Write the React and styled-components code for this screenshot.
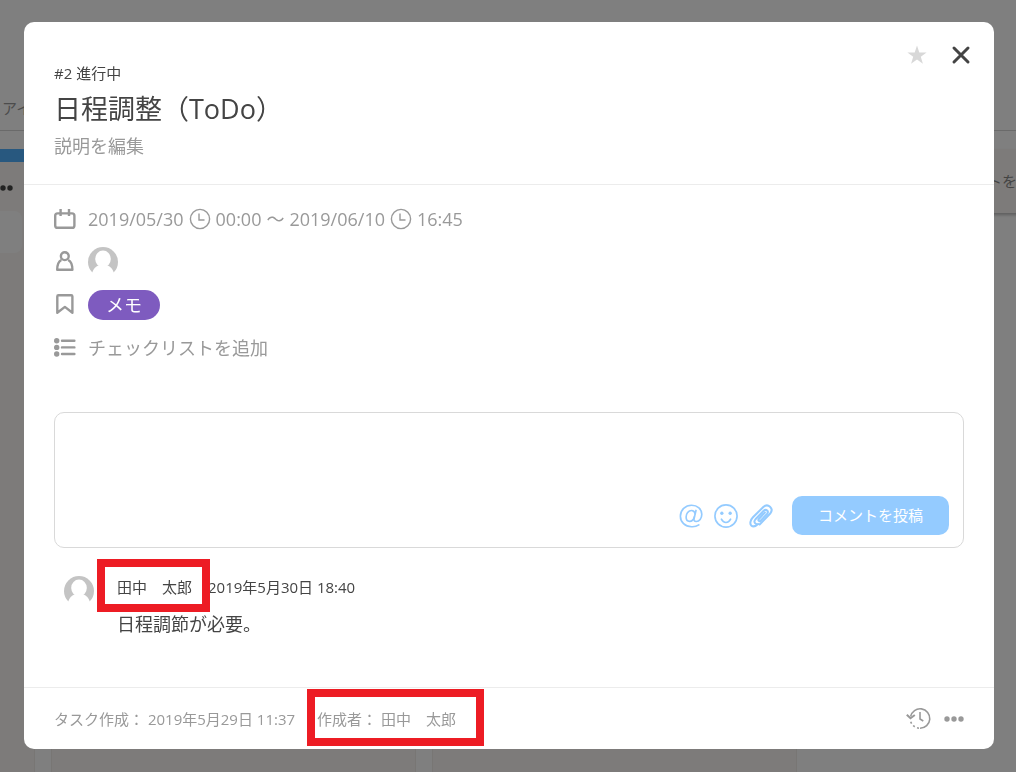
import { useState } from "react";
import styled, { createGlobalStyle } from "styled-components";

const assignee = "田中　太郎";

export default function TaskPage() {
  return (
    <>
      <GlobalStyle />
      <Page>
        <Nav>アイ</Nav>
        <Board>
          <Column>
            <ColumnBar />
            <ColumnMenu type="button" aria-label="リストメニュー">
              <Dots />
            </ColumnMenu>
            <Card />
          </Column>
          <Column />
          <Column />
          <AddList type="button">リストを追加</AddList>
        </Board>
      </Page>
      <Overlay>
        <TaskDialog />
      </Overlay>
    </>
  );
}

function TaskDialog() {
  const [comment, setComment] = useState("");

  return (
    <Dialog role="dialog" aria-labelledby="task-title">
      <Header>
        <Heading>
          <Status>#2 進行中</Status>
          <Title id="task-title">日程調整（ToDo）</Title>
          <TextButton type="button">説明を編集</TextButton>
        </Heading>
        <HeaderActions>
          <IconButton type="button" aria-label="お気に入り">
            <StarIcon />
          </IconButton>
          <IconButton type="button" aria-label="閉じる">
            <CloseIcon />
          </IconButton>
        </HeaderActions>
      </Header>

      <Details>
        <DetailRow>
          <CalendarIcon />
          <Schedule>
            <span>2019/05/30</span>
            <ClockIcon />
            <span>00:00</span>
            <span>～</span>
            <span>2019/06/10</span>
            <ClockIcon />
            <span>16:45</span>
          </Schedule>
        </DetailRow>
        <DetailRow>
          <PersonIcon />
          <Avatar />
        </DetailRow>
        <DetailRow>
          <BookmarkIcon />
          <Tag>メモ</Tag>
        </DetailRow>
        <DetailRow>
          <ListIcon />
          <TextButton type="button">チェックリストを追加</TextButton>
        </DetailRow>
      </Details>

      <CommentForm onSubmit={(event) => event.preventDefault()}>
        <CommentInput
          aria-label="コメント"
          value={comment}
          onChange={(event) => setComment(event.target.value)}
        />
        <CommentTools>
          <IconButton type="button" aria-label="メンション">
            <AtIcon />
          </IconButton>
          <IconButton type="button" aria-label="絵文字">
            <SmileIcon />
          </IconButton>
          <IconButton type="button" aria-label="ファイルを添付">
            <ClipIcon />
          </IconButton>
          <SubmitButton type="submit">コメントを投稿</SubmitButton>
        </CommentTools>
      </CommentForm>

      <Comment>
        <Avatar />
        <div>
          <CommentMeta>
            <NameMark>{assignee}</NameMark>
            <time>2019年5月30日 18:40</time>
          </CommentMeta>
          <CommentBody>日程調節が必要。</CommentBody>
        </div>
      </Comment>

      <Footer>
        <span>タスク作成： 2019年5月29日 11:37</span>
        <CreatorMark>作成者： {assignee}</CreatorMark>
        <FooterActions>
          <IconButton type="button" aria-label="履歴">
            <HistoryIcon />
          </IconButton>
          <IconButton type="button" aria-label="その他">
            <Dots />
          </IconButton>
        </FooterActions>
      </Footer>
    </Dialog>
  );
}

function Dots() {
  return (
    <svg width="20" height="6" viewBox="0 0 20 6" fill="currentColor">
      <circle cx="3" cy="3" r="2.7" />
      <circle cx="10" cy="3" r="2.7" />
      <circle cx="17" cy="3" r="2.7" />
    </svg>
  );
}

function StarIcon() {
  return (
    <svg width="20" height="20" viewBox="0 0 20 20" fill="#d8d8d8">
      <path d="M10 .6 12.3 7.4 19.6 7.5 13.8 11.8 15.9 18.8 10 14.6 4.1 18.8 6.2 11.8.4 7.5 7.7 7.4Z" />
    </svg>
  );
}

function CloseIcon() {
  return (
    <svg width="20" height="20" viewBox="0 0 20 20" stroke="#444" strokeWidth="3" strokeLinecap="round">
      <path d="M3 3 17 17M17 3 3 17" />
    </svg>
  );
}

function CalendarIcon() {
  return (
    <DetailSvg viewBox="0 0 22 22">
      <rect x="1.2" y="5.4" width="19.2" height="14.4" rx="2.4" />
      <path d="M6.6 1V8M15 1V8" />
    </DetailSvg>
  );
}

function PersonIcon() {
  return (
    <DetailSvg viewBox="0 0 22 22">
      <circle cx="10.8" cy="5.2" r="3.9" />
      <path d="M7.400 9C4.600 10.400 3.200 13.800 3.200 18.800H18.400C18.400 13.800 17 10.400 14.200 9" />
    </DetailSvg>
  );
}

function BookmarkIcon() {
  return (
    <DetailSvg viewBox="0 0 22 22">
      <path d="M3.3 2.5Q3.3 1.3 4.5 1.3H17.2Q18.4 1.3 18.4 2.5V18.7L10.9 12.9 3.3 18.7Z" />
    </DetailSvg>
  );
}

function ListIcon() {
  return (
    <DetailSvg viewBox="0 0 22 22">
      <path d="M8 3.8H20.4M8 10.4H20.4M8 17H20.4" strokeLinecap="round" />
      <g fill="#999" stroke="none">
        <circle cx="2.7" cy="3.8" r="2.7" />
        <circle cx="2.7" cy="10.4" r="2.7" />
        <circle cx="2.7" cy="17" r="2.7" />
      </g>
    </DetailSvg>
  );
}

function ClockIcon() {
  return (
    <svg width="22" height="22" viewBox="0 0 22 22" fill="none" stroke="#999" strokeWidth="1.4">
      <circle cx="11" cy="11" r="9.6" />
      <path d="M10 5.5V12H15.5" />
    </svg>
  );
}

function Avatar() {
  return (
    <svg width="30" height="30" viewBox="0 0 30 30" role="img" aria-label={assignee}>
      <circle cx="15" cy="15" r="15" fill="#c4c4c4" />
      <ellipse cx="15" cy="12" rx="7.8" ry="8.4" fill="#fff" />
      <path d="M10.500 18.500C7.500 19.500 5.500 21.500 4.200 25.600L3 31H27L25.800 25.600C24.500 21.500 22.500 19.500 19.500 18.500Z" fill="#fff" />
    </svg>
  );
}

function AtIcon() {
  return (
    <svg width="24" height="24" viewBox="0 0 26 26" fill="none" stroke="#94cbff" strokeWidth="1.8" strokeLinecap="round">
      <path d="M21.5 22.6C19.4 24 16.5 24.8 13.6 24.6 6.600 24.400 1.500 19.600 1.500 13.200 1.500 6.500 6.900 1.400 13.600 1.400 20.100 1.400 24.700 5.600 24.700 11.200 24.700 15.700 22 19 18.700 19 16.700 19 15.900 17.800 16.300 15.700L18.400 7" />
      <path d="M17.4 10.5C17 8.3 15.6 7 13.5 7 10.2 7 7.7 10.4 7.7 14.1 7.7 16.900 9.200 18.800 11.500 18.800 14.100 18.800 15.800 16.800 16.600 14" />
    </svg>
  );
}

function SmileIcon() {
  return (
    <svg width="24" height="24" viewBox="0 0 26 26" fill="none" stroke="#94cbff" strokeWidth="1.8" strokeLinecap="round">
      <circle cx="13" cy="13" r="12" />
      <path d="M8 16.5C9.1 18.8 10.8 20 13 20S16.9 18.8 18 16.5" />
      <g fill="#94cbff" stroke="none">
        <circle cx="8.5" cy="10" r="1.8" />
        <circle cx="17.5" cy="10" r="1.8" />
      </g>
    </svg>
  );
}

function ClipIcon() {
  return (
    <svg width="24" height="24" viewBox="0 0 26 26" fill="none" stroke="#94cbff" strokeWidth="2.2" strokeLinecap="round" strokeLinejoin="round">
      <path d="M17.2 9.3 10.7 16.2C9.3 17.7 11.2 19.5 12.6 18.1L19.5 10.8C22 8 18.6 4.7 15.9 7.4L7 16.6C5.2 18.6 5.600 20.600 7.600 21.600" />
      <path d="M9.800 21.600C7 24.400 4 24.600 2.400 23.200 .800 21.400 1.200 17.600 4.300 14.400L15.500 3.300C20.600-1.400 27.300 4.900 23 10.300L11.500 22.200" />
    </svg>
  );
}

function HistoryIcon() {
  return (
    <svg width="26" height="24" viewBox="0 0 26 24" fill="none" stroke="#999" strokeWidth="1.6">
      <path d="M4.6 9.500A9.700 9.700 0 1 1 14 21.200" />
      <path d="M13 21.200A9.700 9.700 0 0 1 4.300 13" strokeDasharray="2 2.5" />
      <path d="M.8 7.7 4.5 11.3 8.8 8" strokeWidth="2" />
      <path d="M14 5V12L17.300 14" />
    </svg>
  );
}

const GlobalStyle = createGlobalStyle`
  * {
    box-sizing: border-box;
  }

  body {
    margin: 0;
    color: #444;
    background: #fff;
    font-family: "Open Sans", "Noto Sans CJK JP", sans-serif;
    font-size: 15px;
    line-height: 22px;
  }

  button,
  textarea {
    font: inherit;
    color: inherit;
  }

  svg {
    display: block;
    flex: none;
  }
`;

const Page = styled.div`
  height: 100vh;
  overflow: hidden;
  display: flex;
  flex-direction: column;
`;

const Nav = styled.nav`
  padding: 97px 0 11px 2px;
  border-bottom: 1px solid #d4d4d4;
  color: #999;
`;

const Board = styled.main`
  flex: 1;
  display: flex;
  gap: 16px;
  margin: 18px 0 0 -330px;
`;

const Column = styled.section`
  flex: none;
  width: 365px;
  background: #faf7f4;
  border: solid #f0ece8;
  border-width: 0 1px;
`;

const ColumnBar = styled.div`
  height: 13px;
  background: #50b0ff;
`;

const ColumnMenu = styled.button`
  display: flex;
  margin: 23px 21px 20px auto;
  padding: 0;
  border: 0;
  background: none;
`;

const Card = styled.div`
  height: 42px;
  margin: 0 12px;
  border-radius: 8px;
  background: #fff;
`;

const AddList = styled.button`
  flex: none;
  width: 365px;
  height: 64px;
  padding: 0 0 0 144px;
  border: 0;
  background: #faf7f4;
  box-shadow: 0 2px 3px #bbb;
  color: #888;
  text-align: left;
`;

const Overlay = styled.div`
  position: fixed;
  inset: 0;
  padding: 22px 22px 22px 24px;
  overflow: auto;
  background: rgba(0, 0, 0, 0.5);
`;

const Dialog = styled.div`
  border-radius: 10px;
  background: #fff;
`;

const Header = styled.header`
  display: flex;
  justify-content: space-between;
  padding: 22px 23px 26px 30px;
  border-bottom: 1px solid #ececec;
`;

const Heading = styled.div`
  display: flex;
  flex-direction: column;
  align-items: flex-start;
  gap: 4px;
  padding-top: 18px;
`;

const Status = styled.p`
  margin: 0;
`;

const Title = styled.h1`
  margin: 0;
  font-size: 27px;
  font-weight: 400;
  line-height: 42px;
`;

const TextButton = styled.button`
  padding: 0;
  border: 0;
  background: none;
  color: #999;
  font-size: 18px;
  line-height: 24px;
`;

const HeaderActions = styled.div`
  display: flex;
  align-items: flex-start;
  gap: 24px;
`;

const IconButton = styled.button`
  display: flex;
  padding: 0;
  border: 0;
  background: none;
  color: #999;

  ${HeaderActions} & {
    padding-top: 1px;
  }
`;

const Details = styled.section`
  padding: 12px 30px 0;
`;

const DetailRow = styled.div`
  display: flex;
  align-items: center;
  gap: 12px;
  height: 43px;
`;

const DetailSvg = styled.svg`
  width: 22px;
  height: 22px;
  fill: none;
  stroke: #999;
  stroke-width: 2.4;
  stroke-linejoin: round;
`;

const Schedule = styled.div`
  display: flex;
  align-items: center;
  gap: 5px;
  color: #999;
  font-size: 18px;
`;

const Tag = styled.span`
  padding: 0 18px;
  border-radius: 15px;
  background: #7e5bbf;
  color: #fff;
  font-size: 18px;
  line-height: 30px;
`;

const CommentForm = styled.form`
  margin: 43px 30px 28px;
  padding-bottom: 12px;
  border: 1px solid #d9d9d9;
  border-radius: 10px;
`;

const CommentInput = styled.textarea`
  display: block;
  width: 100%;
  height: 83px;
  padding: 12px 16px;
  border: 0;
  outline: 0;
  resize: none;
  background: none;
`;

const CommentTools = styled.div`
  display: flex;
  align-items: center;
  justify-content: flex-end;
  gap: 11px;
  padding-right: 14px;
`;

const SubmitButton = styled.button`
  margin-left: 8px;
  padding: 0 26px;
  border: 0;
  border-radius: 10px;
  background: #94cbff;
  color: #fff;
  line-height: 39px;
`;

const Comment = styled.article`
  display: flex;
  gap: 23px;
  padding: 0 30px 50px 40px;
`;

const CommentMeta = styled.div`
  display: flex;
  gap: 16px;
`;

/* Red frame laid over the marked text */
const Mark = styled.span`
  position: relative;

  &::after {
    content: "";
    position: absolute;
    z-index: 1;
    border: 8px solid #ed1c24;
  }
`;

const NameMark = styled(Mark)`
  &::after {
    inset: -17px -18px -14px -20px;
  }
`;

const CreatorMark = styled(Mark)`
  &::after {
    inset: -19px -28px -16px -10px;
  }
`;

const CommentBody = styled.p`
  margin: 13px 0 0;
  font-size: 18px;
  line-height: 26px;
`;

const Footer = styled.footer`
  display: flex;
  align-items: center;
  gap: 22px;
  height: 62px;
  padding: 0 30px;
  border-top: 1px solid #ececec;
  color: #999;
`;

const FooterActions = styled.div`
  display: flex;
  align-items: center;
  gap: 12px;
  margin-left: auto;
`;
